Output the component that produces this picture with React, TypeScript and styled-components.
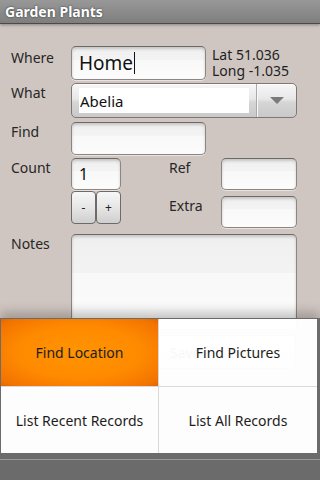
import React from "react";
import styled, { createGlobalStyle } from "styled-components";

const Global = createGlobalStyle`
  html, body { margin: 0; padding: 0; }
  body { width: 320px; height: 480px; overflow: hidden; background: #d0c6c1; font-family: "Noto Sans", "Open Sans", sans-serif; }
  #root { width: 320px; height: 480px; position: relative; overflow: hidden; }
`;

const Screen = styled.div`
  width: 320px;
  height: 480px;
  position: relative;
  display: flex;
  flex-direction: column;
  background: #d0c6c1;
`;

const TitleBar = styled.div`
  height: 23px;
  flex: none;
  background: linear-gradient(#989898, #7e7e7e);
  border-bottom: 1px solid #4a4a4a;
  box-shadow: 0 1px 3px rgba(0, 0, 0, 0.35);
  display: flex;
  align-items: center;
  padding-left: 5px;
  color: #fff;
  font-weight: bold;
  font-size: 14px;
  text-shadow: 0 0 2px rgba(0, 0, 0, 0.7);
`;

const Form = styled.div`
  display: flex;
  flex-direction: column;
  padding: 22px 0 0 11px;
`;

const Row = styled.div<{ $mt?: number }>`
  display: flex;
  align-items: flex-start;
  margin-top: ${(p) => p.$mt ?? 0}px;
`;

const Label = styled.div<{ $w: number; $pt?: number }>`
  width: ${(p) => p.$w}px;
  flex: none;
  font-size: 14px;
  color: #262626;
  padding-top: ${(p) => p.$pt ?? 1}px;
`;

const Field = styled.div<{ $w: number; $h: number; $size?: number }>`
  width: ${(p) => p.$w}px;
  height: ${(p) => p.$h}px;
  flex: none;
  box-sizing: border-box;
  border-radius: 5px;
  border: 1px solid #8c8682;
  border-top-color: #6e6966;
  background: linear-gradient(#efefef 0%, #f3f3f3 40%, #f8f8f8 41%, #fcfcfc 100%);
  box-shadow: inset 0 2px 3px rgba(0, 0, 0, 0.18), 0 1px 0 rgba(255, 255, 255, 0.5);
  font-size: ${(p) => p.$size ?? 16}px;
  color: #111;
  display: flex;
  align-items: center;
  padding-left: 7px;
`;

const Caret = styled.span`
  display: inline-block;
  width: 1px;
  height: 22px;
  background: #111;
  margin-left: 1px;
`;

const LatLong = styled.div`
  margin-left: 6px;
  display: flex;
  flex-direction: column;
  padding-top: 1px;
`;

const LatLine = styled.div`
  font-size: 14px;
  color: #1e1e1e;
  height: 16px;
  line-height: 16px;
  white-space: nowrap;
`;

const Spinner = styled.div`
  width: 226px;
  height: 35px;
  box-sizing: border-box;
  border-radius: 5px;
  border: 1px solid #7d7875;
  background: linear-gradient(#f6f6f6 0%, #e8e8e8 45%, #d6d6d6 55%, #c9c9c9 100%);
  box-shadow: inset 0 1px 0 #fff;
  display: flex;
  align-items: center;
  padding-left: 7px;
`;

const SpinnerText = styled.div`
  width: 170px;
  height: 25px;
  background: #fff;
  font-size: 15px;
  color: #111;
  display: flex;
  align-items: center;
  padding-left: 1px;
  box-sizing: border-box;
`;

const SpinnerDivider = styled.div`
  width: 1px;
  height: 33px;
  margin-left: 7px;
  background: #a9a9a9;
  box-shadow: 1px 0 0 #f8f8f8;
`;

const Arrow = styled.div`
  margin-left: 13px;
  width: 0;
  height: 0;
  border-left: 7px solid transparent;
  border-right: 7px solid transparent;
  border-top: 7px solid #7b7b7b;
`;

const CountCol = styled.div`
  display: flex;
  flex-direction: column;
  width: 50px;
`;

const StepRow = styled.div`
  display: flex;
  margin-top: 1px;
`;

const StepButton = styled.div`
  width: 25px;
  height: 33px;
  box-sizing: border-box;
  border-radius: 4px;
  border: 1px solid #6f6a67;
  background: linear-gradient(#f7f7f7 0%, #e6e6e6 50%, #cfcfcf 100%);
  font-size: 12px;
  color: #222;
  display: flex;
  align-items: center;
  justify-content: center;
`;

const SideCol = styled.div`
  display: flex;
  flex-direction: column;
  margin-left: 48px;
`;

const SaveButton = styled.div`
  margin: 5px 0 0 157px;
  width: 139px;
  height: 34px;
  box-sizing: border-box;
  border-radius: 5px;
  border: 1px solid #8a8583;
  background: linear-gradient(#f7f7f7, #d4d4d4);
  font-size: 14px;
  color: #222;
  display: flex;
  align-items: center;
  padding-left: 12px;
`;

const Menu = styled.div`
  position: absolute;
  left: 0;
  right: 0;
  top: 318px;
  bottom: 0;
  display: flex;
  flex-direction: column;
  box-shadow: 0 -6px 10px rgba(0, 0, 0, 0.22);
`;

const MenuGrid = styled.div`
  border-style: solid;
  border-color: #6b6b6b;
  border-width: 1px 3px 0 1px;
  display: grid;
  grid-template-columns: 157px 159px;
  grid-template-rows: 67px 67px;
  background: rgba(255, 255, 255, 0.965);
`;

const MenuItem = styled.div<{ $active?: boolean; $right?: boolean; $bottom?: boolean }>`
  display: flex;
  align-items: center;
  justify-content: center;
  font-size: 14px;
  color: #1c1c1c;
  box-sizing: border-box;
  border-left: ${(p) => (p.$right ? "1px solid #d9d9d9" : "none")};
  border-top: ${(p) => (p.$bottom ? "1px solid #d9d9d9" : "none")};
  background: ${(p) =>
    p.$active
      ? "radial-gradient(ellipse at center, #ff9400 0%, #ff8a00 55%, #f27400 90%, #e46500 100%)"
      : "transparent"};
`;

const MenuFooter = styled.div`
  flex: 1;
  background: #6b6b6b;
  padding-top: 6px;
`;

const MenuFooterLine = styled.div`
  height: 1px;
  background: #9a9a9a;
`;

export default function App() {
  return (
    <Screen>
      <Global />
      <TitleBar>Garden Plants</TitleBar>
      <Form>
        <Row>
          <Label $w={60} $pt={2}>Where</Label>
          <Field $w={135} $h={34} $size={19}>
            Home<Caret />
          </Field>
          <LatLong>
            <LatLine>Lat 51.036</LatLine>
            <LatLine>Long -1.035</LatLine>
          </LatLong>
        </Row>
        <Row $mt={3}>
          <Label $w={60} $pt={0}>What</Label>
          <Spinner>
            <SpinnerText>Abelia</SpinnerText>
            <SpinnerDivider />
            <Arrow />
          </Spinner>
        </Row>
        <Row $mt={4}>
          <Label $w={60} $pt={0}>Find</Label>
          <Field $w={135} $h={33} />
        </Row>
        <Row $mt={3}>
          <Label $w={60} $pt={0}>Count</Label>
          <CountCol>
            <Field $w={50} $h={32} $size={16}>1</Field>
            <StepRow>
              <StepButton>-</StepButton>
              <StepButton>+</StepButton>
            </StepRow>
          </CountCol>
          <SideCol>
            <Row>
              <Label $w={52} $pt={0}>Ref</Label>
              <Field $w={76} $h={32} />
            </Row>
            <Row $mt={6}>
              <Label $w={52} $pt={0}>Extra</Label>
              <Field $w={76} $h={32} />
            </Row>
          </SideCol>
        </Row>
        <Row $mt={6}>
          <Label $w={60} $pt={0}>Notes</Label>
          <Field $w={226} $h={96} />
        </Row>
      </Form>
      <SaveButton>Save</SaveButton>
      <Menu>
        <MenuGrid>
          <MenuItem $active>Find Location</MenuItem>
          <MenuItem $right>Find Pictures</MenuItem>
          <MenuItem $bottom>List Recent Records</MenuItem>
          <MenuItem $right $bottom>List All Records</MenuItem>
        </MenuGrid>
        <MenuFooter>
          <MenuFooterLine />
        </MenuFooter>
      </Menu>
    </Screen>
  );
}
